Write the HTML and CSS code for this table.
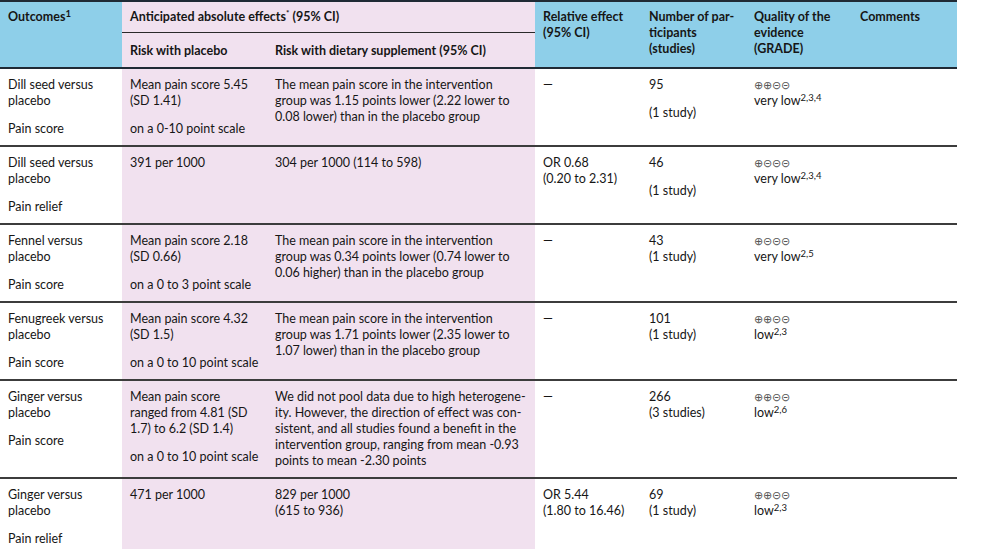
FILE: index.html
```html
<!DOCTYPE html>
<html>
<head>
<meta charset="utf-8">
<link rel="stylesheet" href="styles.css">
</head>
<body>
<table class="sof">
  <colgroup>
    <col class="c-out"><col class="c-plac"><col class="c-supp"><col class="c-rel"><col class="c-num"><col class="c-qual"><col class="c-com">
  </colgroup>
  <thead>
    <tr class="h1">
      <th rowspan="2" class="blue">Outcomes<span class="sup">1</span></th>
      <th colspan="2" class="pink top">Anticipated absolute effects<span class="star">*</span> (95% CI)</th>
      <th rowspan="2" class="blue">Relative effect<br>(95% CI)</th>
      <th rowspan="2" class="blue">Number of par-<br>ticipants<br>(studies)</th>
      <th rowspan="2" class="blue">Quality of the<br>evidence<br>(GRADE)</th>
      <th rowspan="2" class="blue">Comments</th>
    </tr>
    <tr class="h2">
      <th class="pink">Risk with placebo</th>
      <th class="pink">Risk with dietary supplement (95% CI)</th>
    </tr>
  </thead>
  <tbody>
    <tr>
      <td><p>Dill seed versus<br>placebo</p><p>Pain score</p></td>
      <td class="pink"><p>Mean pain score 5.45<br>(SD 1.41)</p><p>on a 0-10 point scale</p></td>
      <td class="pink"><p>The mean pain score in the intervention<br>group was 1.15 points lower (2.22 lower to<br>0.08 lower) than in the placebo group</p></td>
      <td><p>—</p></td>
      <td><p>95</p><p>(1 study)</p></td>
      <td><p><span class="grade">⊕⊕⊝⊝</span><br>very low<span class="sup">2,3,4</span></p></td>
      <td></td>
    </tr>
    <tr>
      <td><p>Dill seed versus<br>placebo</p><p>Pain relief</p></td>
      <td class="pink"><p>391 per 1000</p></td>
      <td class="pink"><p>304 per 1000 (114 to 598)</p></td>
      <td><p>OR 0.68<br>(0.20 to 2.31)</p></td>
      <td><p>46</p><p>(1 study)</p></td>
      <td><p><span class="grade">⊕⊝⊝⊝</span><br>very low<span class="sup">2,3,4</span></p></td>
      <td></td>
    </tr>
    <tr>
      <td><p>Fennel versus<br>placebo</p><p>Pain score</p></td>
      <td class="pink"><p>Mean pain score 2.18<br>(SD 0.66)</p><p>on a 0 to 3 point scale</p></td>
      <td class="pink"><p>The mean pain score in the intervention<br>group was 0.34 points lower (0.74 lower to<br>0.06 higher) than in the placebo group</p></td>
      <td><p>—</p></td>
      <td><p>43<br>(1 study)</p></td>
      <td><p><span class="grade">⊕⊝⊝⊝</span><br>very low<span class="sup">2,5</span></p></td>
      <td></td>
    </tr>
    <tr>
      <td><p>Fenugreek versus<br>placebo</p><p>Pain score</p></td>
      <td class="pink"><p>Mean pain score 4.32<br>(SD 1.5)</p><p>on a 0 to 10 point scale</p></td>
      <td class="pink"><p>The mean pain score in the intervention<br>group was 1.71 points lower (2.35 lower to<br>1.07 lower) than in the placebo group</p></td>
      <td><p>—</p></td>
      <td><p>101<br>(1 study)</p></td>
      <td><p><span class="grade">⊕⊕⊝⊝</span><br>low<span class="sup">2,3</span></p></td>
      <td></td>
    </tr>
    <tr>
      <td><p>Ginger versus<br>placebo</p><p>Pain score</p></td>
      <td class="pink"><p>Mean pain score<br>ranged from 4.81 (SD<br>1.7) to 6.2 (SD 1.4)</p><p>on a 0 to 10 point scale</p></td>
      <td class="pink"><p>We did not pool data due to high heterogene-<br>ity. However, the direction of effect was con-<br>sistent, and all studies found a benefit in the<br>intervention group, ranging from mean -0.93<br>points to mean -2.30 points</p></td>
      <td><p>—</p></td>
      <td><p>266<br>(3 studies)</p></td>
      <td><p><span class="grade">⊕⊕⊝⊝</span><br>low<span class="sup">2,6</span></p></td>
      <td></td>
    </tr>
    <tr>
      <td><p>Ginger versus<br>placebo</p><p>Pain relief</p></td>
      <td class="pink"><p>471 per 1000</p></td>
      <td class="pink"><p>829 per 1000<br>(615 to 936)</p></td>
      <td><p>OR 5.44<br>(1.80 to 16.46)</p></td>
      <td><p>69<br>(1 study)</p></td>
      <td><p><span class="grade">⊕⊕⊝⊝</span><br>low<span class="sup">2,3</span></p></td>
      <td></td>
    </tr>
  </tbody>
</table>
</body>
</html>
```
FILE: styles.css
```css
html, body {
  margin: 0;
  padding: 0;
  background: #ffffff;
}
body {
  font-family: "Lato", "Open Sans", sans-serif;
  font-size: 12.5px;
  line-height: 16px;
  color: #161616;
}
.sof {
  border-collapse: collapse;
  table-layout: fixed;
  width: 957px;
  border-top: 2px solid #1f2a35;
}
.c-out { width: 122px; }
.c-plac { width: 145px; }
.c-supp { width: 268px; }
.c-rel { width: 106px; }
.c-num { width: 105px; }
.c-qual { width: 106px; }
.c-com { width: 105px; }

th {
  text-align: left;
  vertical-align: top;
  font-weight: 700;
  padding: 7px 8px 10px 8px;
  white-space: nowrap;
}
th.blue { background: #8ecfe9; border-bottom: 2px solid #1f2a35; }
th.pink { background: #f1e1ef; }
.h1 th.top {
  padding: 7px 8px 7px 8px;
  border-bottom: 1px solid #2a2a2a;
}
.h2 th.pink {
  padding: 10px 8px 8px 8px;
  border-bottom: 2px solid #1f2a35;
}
td {
  vertical-align: top;
  padding: 8px 8px 8px 8px;
  white-space: nowrap;
  border-bottom: 2px solid #3c3c3c;
}
td.pink { background: #f1e1ef; }
tbody tr:last-child td { border-bottom: none; }
p { margin: 0; }
p + p { margin-top: 12px; }
.sup {
  font-size: 9.5px;
  vertical-align: 4px;
  line-height: 0;
  font-weight: inherit;
}
.star {
  font-size: 8px;
  vertical-align: 5px;
  line-height: 0;
}
.grade {
  font-size: 11px;
  color: #555555;
  letter-spacing: 0;
}
```
